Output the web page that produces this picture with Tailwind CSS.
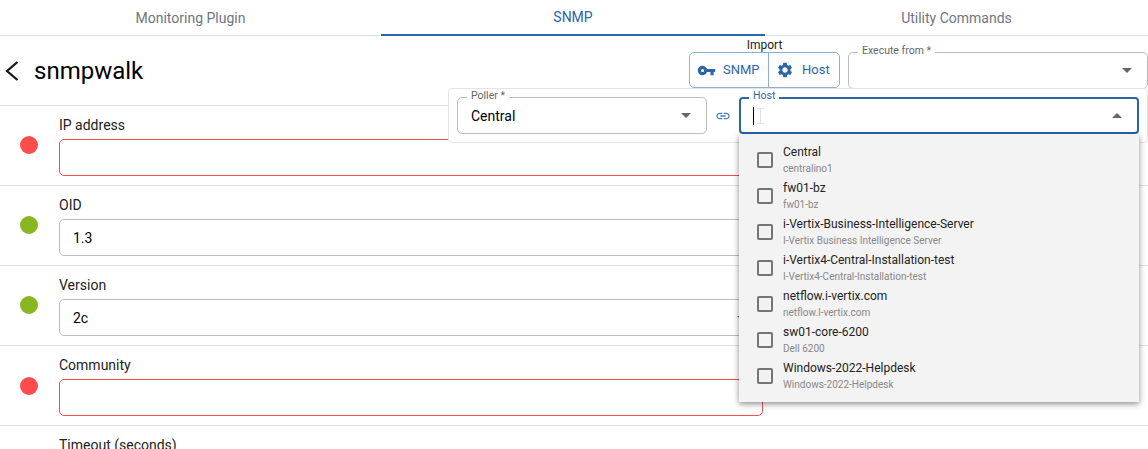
<!DOCTYPE html>
<html lang="en">
<head>
    <meta charset="UTF-8">
    <title>snmpwalk</title>
    <script src="https://cdn.jsdelivr.net/npm/@tailwindcss/browser@4"></script>
</head>
<body class="bg-white font-['Roboto',sans-serif] text-black">
    <div class="relative h-[449px] w-[1148px] overflow-hidden">
        <!-- Tabs -->
        <div class="grid h-[36px] grid-cols-[381px_384px_383px] border-b border-[#e0e0e0] text-[14px] text-[#6e7681]">
            <div class="flex h-[36px] items-center justify-center">Monitoring Plugin</div>
            <div class="flex h-[36px] items-center justify-center border-b-2 border-[#2d66a8] text-[#2d66a8]">SNMP</div>
            <div class="flex h-[36px] items-center justify-center">Utility Commands</div>
        </div>

        <!-- Header -->
        <div class="flex h-[69px] items-start justify-between">
            <div class="flex h-[69px] items-center">
                <svg class="ml-[5px] mr-[15px] h-[20px] w-[14px]" viewBox="0 0 14 20" fill="none" stroke="#111" stroke-width="2.2"><path d="M12.5 1 L2 10 L12.5 19"/></svg>
                <span class="text-[24px] leading-none">snmpwalk</span>
            </div>
            <div class="flex items-start">
                <div class="mr-[8px] flex flex-col items-center">
                    <div class="h-[16px] text-[12px] leading-[18px] text-[#222]">Import</div>
                    <div class="flex h-[36px] w-[151px] rounded-[5px] border border-[#8fb0d3] text-[13px] text-[#2d66a8]">
                        <div class="flex w-[79px] items-center border-r border-[#8fb0d3] pl-[7px]">
                            <svg class="mr-[7px] h-[19px] w-[19px]" viewBox="0 0 24 24" fill="#2d66a8"><path d="M12.65 10C11.83 7.67 9.61 6 7 6c-3.31 0-6 2.69-6 6s2.69 6 6 6c2.61 0 4.83-1.67 5.65-4H17v4h4v-4h2v-4H12.65zM7 14c-1.1 0-2-.9-2-2s.9-2 2-2 2 .9 2 2-.9 2-2 2z"/></svg>
                            SNMP
                        </div>
                        <div class="flex flex-1 items-center pl-[7px]">
                            <svg class="mr-[8px] h-[18px] w-[18px]" viewBox="0 0 24 24" fill="#2d66a8"><path d="M19.14 12.94c.04-.3.06-.61.06-.94 0-.32-.02-.64-.07-.94l2.03-1.58c.18-.14.23-.41.12-.61l-1.92-3.32c-.12-.22-.37-.29-.59-.22l-2.39.96c-.5-.38-1.03-.7-1.62-.94l-.36-2.54c-.04-.24-.24-.41-.48-.41h-3.84c-.24 0-.43.17-.47.41l-.36 2.54c-.59.24-1.13.57-1.62.94l-2.39-.96c-.22-.08-.47 0-.59.22L2.74 8.87c-.12.21-.08.47.12.61l2.03 1.58c-.05.3-.09.63-.09.94s.02.64.07.94l-2.03 1.58c-.18.14-.23.41-.12.61l1.92 3.32c.12.22.37.29.59.22l2.39-.96c.5.38 1.03.7 1.62.94l.36 2.54c.05.24.24.41.48.41h3.84c.24 0 .44-.17.47-.41l.36-2.54c.59-.24 1.13-.56 1.62-.94l2.39.96c.22.08.47 0 .59-.22l1.92-3.32c.12-.22.07-.47-.12-.61l-2.01-1.58zM12 15.6c-1.98 0-3.6-1.62-3.6-3.6s1.62-3.6 3.6-3.6 3.6 1.62 3.6 3.6-1.62 3.6-3.6 3.6z"/></svg>
                            Host
                        </div>
                    </div>
                </div>
                <div class="relative mt-[16px] flex h-[37px] w-[300px] items-center justify-end rounded-[5px] border border-[#bdbdbd] pr-[15px]">
                    <span class="absolute left-[9px] top-[-8px] bg-white px-[4px] text-[10.5px] leading-[12px] text-[#666]">Execute from *</span>
                    <div class="h-0 w-0 border-x-[5px] border-t-[5px] border-x-transparent border-t-[#666]"></div>
                </div>
            </div>
        </div>

        <!-- Fields -->
        <div class="border-t border-[#e0e0e0] text-[14px]">
            <div class="flex h-[80px] border-b border-[#e0e0e0]">
                <div class="ml-[20px] mt-[30px] h-[18px] w-[18px] rounded-full bg-[#ff4d4d]"></div>
                <div class="ml-[21px] w-[704px] pt-[9px]">
                    <div class="h-[24px] leading-[20px] text-[#222]">IP address</div>
                    <div class="h-[37px] rounded-[5px] border border-[#ef4f4f]"></div>
                </div>
            </div>
            <div class="flex h-[80px] border-b border-[#e0e0e0]">
                <div class="ml-[20px] mt-[30px] h-[18px] w-[18px] rounded-full bg-[#8ab71f]"></div>
                <div class="ml-[21px] w-[704px] pt-[9px]">
                    <div class="h-[24px] leading-[20px] text-[#222]">OID</div>
                    <div class="flex h-[37px] items-center rounded-[5px] border border-[#bdbdbd] pl-[13px] pt-[2px]">1.3</div>
                </div>
            </div>
            <div class="flex h-[80px] border-b border-[#e0e0e0]">
                <div class="ml-[20px] mt-[30px] h-[18px] w-[18px] rounded-full bg-[#8ab71f]"></div>
                <div class="ml-[21px] w-[704px] pt-[9px]">
                    <div class="h-[24px] leading-[20px] text-[#222]">Version</div>
                    <div class="flex h-[37px] items-center justify-between rounded-[5px] border border-[#bdbdbd] pl-[13px] pr-[15px] pt-[2px]">
                        2c
                        <div class="h-0 w-0 border-x-[5px] border-t-[5px] border-x-transparent border-t-[#666]"></div>
                    </div>
                </div>
            </div>
            <div class="flex h-[80px] border-b border-[#e0e0e0]">
                <div class="ml-[20px] mt-[31px] h-[18px] w-[18px] rounded-full bg-[#ff4d4d]"></div>
                <div class="ml-[21px] w-[704px] pt-[9px]">
                    <div class="h-[24px] leading-[20px] text-[#222]">Community</div>
                    <div class="h-[37px] rounded-[5px] border border-[#ef4f4f]"></div>
                </div>
            </div>
            <div class="flex h-[80px]">
                <div class="ml-[59px] w-[704px] pt-[9px]">
                    <div class="h-[24px] leading-[20px] text-[#222]">Timeout (seconds)</div>
                </div>
            </div>
        </div>

        <!-- Import from host panel -->
        <div class="absolute left-[448px] top-[88px] flex h-[55px] w-[700px] items-start rounded-[4px] border border-[#e4e4e4] bg-white pl-[8px] pt-[8px] text-[14px]">
            <div class="relative flex h-[37px] w-[250px] items-center justify-between rounded-[5px] border border-[#bdbdbd] pl-[13px] pr-[15px]">
                <span class="absolute left-[9px] top-[-8px] bg-white px-[4px] text-[10.5px] leading-[12px] text-[#666]">Poller *</span>
                <span class="pt-[2px]">Central</span>
                <div class="h-0 w-0 border-x-[5px] border-t-[5px] border-x-transparent border-t-[#666]"></div>
            </div>
            <div class="flex h-[37px] w-[32px] items-center justify-center">
                <svg class="h-[16px] w-[16px]" viewBox="0 0 24 24" fill="#4a80bb"><path d="M3.9 12c0-1.71 1.39-3.1 3.1-3.1h4V7H7c-2.76 0-5 2.24-5 5s2.24 5 5 5h4v-1.9H7c-1.71 0-3.1-1.39-3.1-3.1zM8 13h8v-2H8v2zm9-6h-4v1.9h4c1.71 0 3.1 1.39 3.1 3.1s-1.39 3.1-3.1 3.1h-4V17h4c2.76 0 5-2.24 5-5s-2.24-5-5-5z"/></svg>
            </div>
            <div class="relative flex h-[37px] w-[400px] items-center justify-between rounded-[4px] border-2 border-[#2d66a8] pl-[12px] pr-[15px]">
                <span class="absolute left-[8px] top-[-9px] bg-white px-[4px] text-[10.5px] leading-[12px] text-[#2d66a8]">Host</span>
                <div class="flex items-center">
                    <div class="h-[18px] w-px bg-black"></div>
                    <!-- mouse cursor left in the field -->
                    <svg class="ml-[3px] h-[16px] w-[7px]" viewBox="0 0 7 16" fill="none" stroke="#e2e2e2"><path d="M0 .5H7M0 15.5H7M3.5 .5V15.5"/></svg>
                </div>
                <div class="h-0 w-0 border-x-[5px] border-b-[5px] border-x-transparent border-b-[#666]"></div>
            </div>
        </div>

        <!-- Host dropdown -->
        <div class="absolute left-[739px] top-[134px] h-[268px] w-[400px] bg-[#f3f3f3] pt-[8px] shadow-[0_2px_6px_rgba(0,0,0,0.45)]">
            <div class="flex h-[36px] items-center pl-[18px]">
                <div class="mr-[10px] h-[16px] w-[16px] rounded-[2px] border-2 border-[#757575]"></div>
                <div><div class="h-[18px] text-[12px] leading-[20px] text-[#222]">Central</div><div class="h-[18px] text-[10px] leading-[18px] text-[#888]">centralino1</div></div>
            </div>
            <div class="flex h-[36px] items-center pl-[18px]">
                <div class="mr-[10px] h-[16px] w-[16px] rounded-[2px] border-2 border-[#757575]"></div>
                <div><div class="h-[18px] text-[12px] leading-[20px] text-[#222]">fw01-bz</div><div class="h-[18px] text-[10px] leading-[18px] text-[#888]">fw01-bz</div></div>
            </div>
            <div class="flex h-[36px] items-center pl-[18px]">
                <div class="mr-[10px] h-[16px] w-[16px] rounded-[2px] border-2 border-[#757575]"></div>
                <div><div class="h-[18px] text-[12px] leading-[20px] text-[#222]">i-Vertix-Business-Intelligence-Server</div><div class="h-[18px] text-[10px] leading-[18px] text-[#888]">I-Vertix Business Intelligence Server</div></div>
            </div>
            <div class="flex h-[36px] items-center pl-[18px]">
                <div class="mr-[10px] h-[16px] w-[16px] rounded-[2px] border-2 border-[#757575]"></div>
                <div><div class="h-[18px] text-[12px] leading-[20px] text-[#222]">i-Vertix4-Central-Installation-test</div><div class="h-[18px] text-[10px] leading-[18px] text-[#888]">I-Vertix4-Central-Installation-test</div></div>
            </div>
            <div class="flex h-[36px] items-center pl-[18px]">
                <div class="mr-[10px] h-[16px] w-[16px] rounded-[2px] border-2 border-[#757575]"></div>
                <div><div class="h-[18px] text-[12px] leading-[20px] text-[#222]">netflow.i-vertix.com</div><div class="h-[18px] text-[10px] leading-[18px] text-[#888]">netflow.I-vertix.com</div></div>
            </div>
            <div class="flex h-[36px] items-center pl-[18px]">
                <div class="mr-[10px] h-[16px] w-[16px] rounded-[2px] border-2 border-[#757575]"></div>
                <div><div class="h-[18px] text-[12px] leading-[20px] text-[#222]">sw01-core-6200</div><div class="h-[18px] text-[10px] leading-[18px] text-[#888]">Dell 6200</div></div>
            </div>
            <div class="flex h-[36px] items-center pl-[18px]">
                <div class="mr-[10px] h-[16px] w-[16px] rounded-[2px] border-2 border-[#757575]"></div>
                <div><div class="h-[18px] text-[12px] leading-[20px] text-[#222]">Windows-2022-Helpdesk</div><div class="h-[18px] text-[10px] leading-[18px] text-[#888]">Windows-2022-Helpdesk</div></div>
            </div>
        </div>
    </div>
</body>
</html>
